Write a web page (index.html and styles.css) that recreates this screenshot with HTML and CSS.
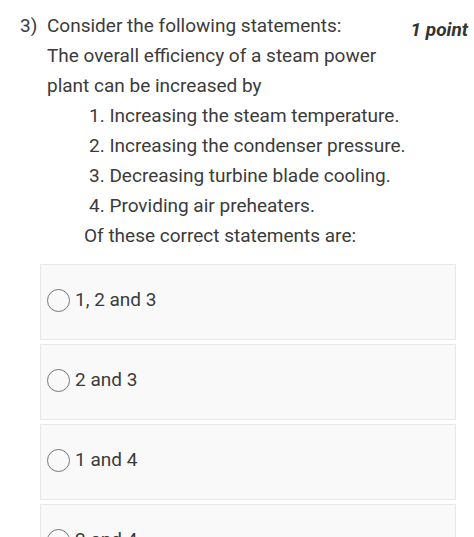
FILE: index.html
```html
<!DOCTYPE html>
<html>
<head>
<meta charset="utf-8">
<link rel="stylesheet" href="styles.css">
</head>
<body>
<div class="question">
  <div class="head">
    <span class="num">3)</span>
    <div class="stem">
      <div>Consider the following statements:</div>
      <div>The overall efficiency of a steam power plant can be increased by</div>
    </div>
    <span class="points">1 point</span>
  </div>
  <div class="items">
    <div>1. Increasing the steam temperature.</div>
    <div>2. Increasing the condenser pressure.</div>
    <div>3. Decreasing turbine blade cooling.</div>
    <div>4. Providing air preheaters.</div>
  </div>
  <div class="tail">Of these correct statements are:</div>
  <div class="options">
    <label class="option"><span class="radio"></span><span>1, 2 and 3</span></label>
    <label class="option"><span class="radio"></span><span>2 and 3</span></label>
    <label class="option"><span class="radio"></span><span>1 and 4</span></label>
    <label class="option"><span class="radio"></span><span>2 and 4</span></label>
  </div>
</div>
</body>
</html>
```
FILE: styles.css
```css
html, body {
  margin: 0;
  background: #ffffff;
}
body {
  font-family: Roboto, "Liberation Sans", sans-serif;
  color: #3b3b3b;
  font-size: 19px;
  line-height: 30px;
  overflow: hidden;
}
.question {
  padding-top: 11px;
}
.head {
  display: flex;
  align-items: flex-start;
}
.num {
  width: 27px;
  padding-left: 20px;
  flex: none;
}
.stem {
  width: 345px;
  flex: none;
}
.points {
  margin-left: auto;
  padding-right: 6px;
  font-size: 19px;
  font-weight: bold;
  font-style: italic;
  color: #333;
  padding-top: 4px;
}
.items {
  padding-left: 89px;
}
.tail {
  padding-left: 84px;
}
.options {
  margin: 13px 18px 0 40px;
  display: flex;
  flex-direction: column;
  gap: 4px;
}
.option {
  height: 76px;
  box-sizing: border-box;
  border: 1px solid #e8e8e8;
  background: #f9f9f9;
  display: flex;
  align-items: center;
  padding: 0 0 4px 6px;
  gap: 5px;
  font-size: 19px;
}
.radio {
  width: 23px;
  height: 23px;
  box-sizing: border-box;
  border: 1.5px solid #777;
  border-radius: 50%;
  flex: none;
}
```
